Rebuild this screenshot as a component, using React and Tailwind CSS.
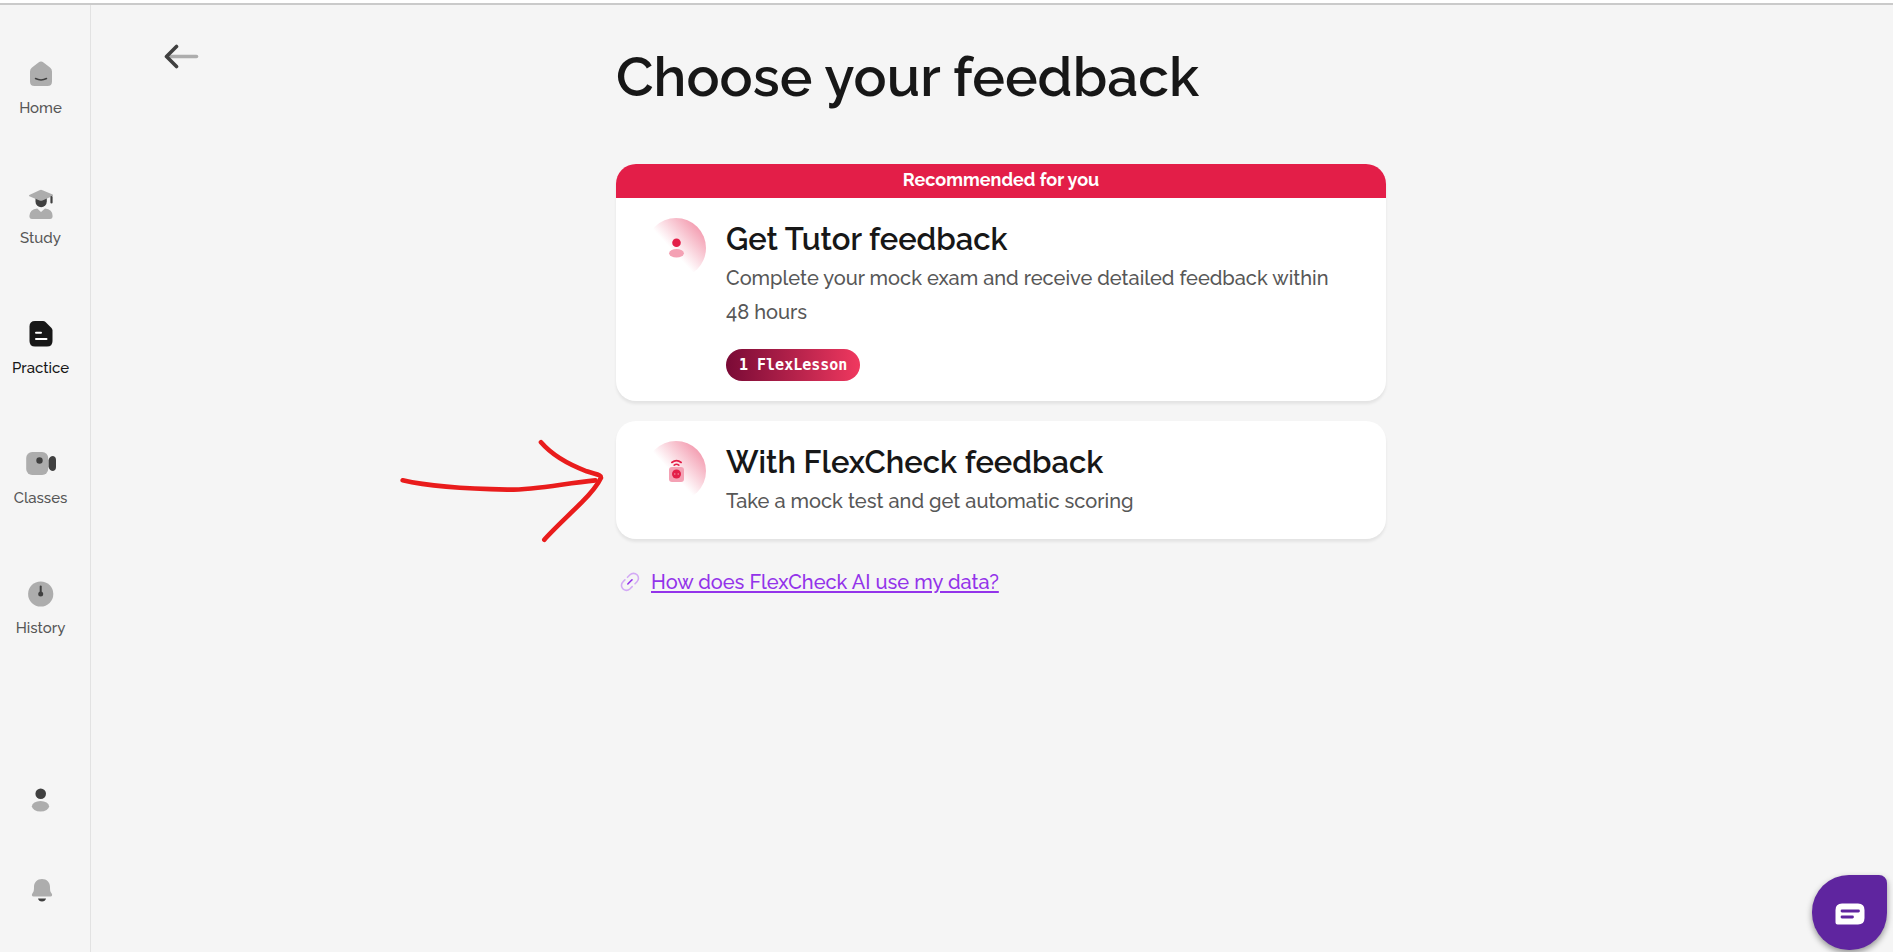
const fontBody = "font-[Raleway,Lato,'Open_Sans',sans-serif]";

function HomeIcon() {
  return (
    <svg width="32" height="32" viewBox="0 0 32 32" aria-hidden="true">
      <path d="M5 13.5Q5 11 7 9.500L13.500 4.500Q16 2.600 18.500 4.500L25 9.500Q27 11 27 13.500V23.500Q27 28 22.500 28H9.500Q5 28 5 23.500Z" fill="#adadad" />
      <path d="M10.500 20.500Q16 23.300 21.500 20.500" fill="none" stroke="#404040" strokeWidth="1.500" strokeLinecap="round" />
    </svg>
  );
}

function StudyIcon() {
  return (
    <svg width="32" height="32" viewBox="0 0 32 32" aria-hidden="true">
      <path d="M10.500 9H21.800V13.500A5.650 5.800 0 0 1 10.500 13.500Z" fill="#404040" />
      <path d="M4.300 7L14.500 2.200Q16 1.500 17.500 2.200L27.700 6.600Q28.500 7.200 27.700 7.900L17.500 12.500Q16 13.200 14.500 12.500L4.300 8.300Q3.500 7.700 4.300 7Z" fill="#adadad" />
      <path d="M26.500 9V14.500" stroke="#404040" strokeWidth="2.200" strokeLinecap="round" />
      <path d="M12.200 20.600L16 24L20 20.600Q27.600 21.500 27.600 28Q27.600 31 25 31H7Q4.400 31 4.400 28Q4.800 21.500 12.200 20.600Z" fill="#adadad" />
    </svg>
  );
}

function PracticeIcon() {
  return (
    <svg width="32" height="32" viewBox="0 0 32 32" aria-hidden="true">
      <path d="M10 3H18Q19.500 3 20.500 4L26.500 10Q27.500 11 27.500 12.500V23Q27.500 28.500 22 28.500H10Q4.500 28.500 4.500 23V8.500Q4.500 3 10 3Z" fill="#171717" />
      <path d="M11 14.700H16M11 21H21.500" stroke="#fff" strokeWidth="2" strokeLinecap="round" />
    </svg>
  );
}

function ClassesIcon() {
  return (
    <svg width="32" height="32" viewBox="0 0 32 32" aria-hidden="true">
      <rect x="1.200" y="4" width="22" height="23" rx="6" fill="#adadad" />
      <circle cx="14.500" cy="12.500" r="3.200" fill="#404040" />
      <path d="M23.500 12Q24.700 8 28 8Q31 8.500 31 12V19Q31 22.500 28 23Q24.700 23 23.500 19Z" fill="#404040" />
    </svg>
  );
}

function HistoryIcon() {
  return (
    <svg width="32" height="32" viewBox="0 0 32 32" aria-hidden="true">
      <circle cx="15.700" cy="16" r="12.600" fill="#adadad" />
      <path d="M15.700 8.500V16" stroke="#404040" strokeWidth="2" strokeLinecap="round" />
      <circle cx="15.700" cy="16" r="2.500" fill="#404040" />
    </svg>
  );
}

const navItems = [
  { label: "Home", Icon: HomeIcon },
  { label: "Study", Icon: StudyIcon },
  { label: "Practice", Icon: PracticeIcon, active: true },
  { label: "Classes", Icon: ClassesIcon },
  { label: "History", Icon: HistoryIcon },
];

function Sidebar() {
  return (
    <aside className="flex w-[91px] shrink-0 flex-col justify-between border-r border-[#e2e2e2] pt-[53px] pr-[9px] pb-[44px]">
      <nav className="flex flex-col gap-[70px]">
        {navItems.map(({ label, Icon, active }) => (
          <a
            key={label}
            href="#"
            className={`flex h-[60px] flex-col items-center justify-between text-[15px] leading-5 font-medium ${active ? "text-[#171717]" : "text-[#575757]"}`}
          >
            <Icon />
            {label}
          </a>
        ))}
      </nav>
      <div className="flex flex-col items-center gap-[54px]">
        <button type="button" aria-label="Profile" className="size-9">
          <svg width="36" height="36" viewBox="0 0 36 36" aria-hidden="true">
            <circle cx="17.700" cy="11.800" r="5.300" fill="#404040" />
            <ellipse cx="17.500" cy="24.300" rx="8.600" ry="5.300" fill="#adadad" />
          </svg>
        </button>
        <button type="button" aria-label="Notifications" className="size-9">
          <svg width="36" height="36" viewBox="0 0 36 36" aria-hidden="true">
            <path d="M19 7C23.800 7 27 10.500 27 15C27 19 27.500 20 28.500 21.300C29.800 23 29 24.500 27.500 24.500H10.500C9 24.500 8.200 23 9.500 21.300C10.500 20 11 19 11 15C11 10.500 14.200 7 19 7Z" fill="#adadad" />
            <path d="M15 26.500H23Q22.300 29.500 19 29.500Q15.700 29.500 15 26.500Z" fill="#404040" />
          </svg>
        </button>
      </div>
    </aside>
  );
}

function IconHalo({ id, children }) {
  return (
    <svg width="60" height="60" viewBox="0 0 60 60" aria-hidden="true" className="shrink-0">
      <defs>
        <linearGradient id={id} x1="52" y1="10" x2="27" y2="33" gradientUnits="userSpaceOnUse">
          <stop offset="0" stopColor="#f4a1b4" />
          <stop offset="1" stopColor="#fff" />
        </linearGradient>
      </defs>
      <circle cx="30" cy="30" r="30" fill={`url(#${id})`} />
      {children}
    </svg>
  );
}

function TutorIcon() {
  return (
    <IconHalo id="halo-tutor">
      <circle cx="30.500" cy="24.700" r="4.300" fill="#e31e48" />
      <ellipse cx="30.500" cy="35.200" rx="7.400" ry="4.200" fill="#f4a1b4" />
    </IconHalo>
  );
}

function RobotIcon() {
  return (
    <IconHalo id="halo-robot">
      <path d="M25.800 21.500Q30.500 17.800 35.200 21.500M28.200 24.200Q30.500 22.400 32.800 24.200" fill="none" stroke="#e31e48" strokeWidth="1.600" strokeLinecap="round" />
      <rect x="23" y="26" width="15" height="15" rx="3" fill="#f4a1b4" />
      <circle cx="30.500" cy="33" r="4.500" fill="#e31e48" />
      <circle cx="28.800" cy="33" r="0.700" fill="#f4a1b4" />
      <circle cx="32.200" cy="33" r="0.700" fill="#f4a1b4" />
    </IconHalo>
  );
}

function OptionCard({ banner, icon, title, text, badge }) {
  return (
    <button type="button" className="block w-full overflow-hidden rounded-[20px] bg-white text-left shadow-[0_3px_3px_rgba(0,0,0,0.07)]">
      {banner && (
        <span className="block bg-[#e31e48] pt-[3px] pb-[5px] text-center text-lg leading-[26px] font-bold text-white">{banner}</span>
      )}
      <span className="flex gap-5 px-[30px] py-5">
        {icon}
        <span className="block min-h-[78px] min-w-0 pr-4">
          <span className="block text-[31px] leading-[43px] font-semibold text-[#171717]">{title}</span>
          <span className="block text-xl leading-[34px] font-medium text-[#575757]">{text}</span>
          {badge && (
            <span className="mt-5 inline-block rounded-full bg-linear-to-r from-[#7a0a36] to-[#f0385f] px-[13px] align-top font-['DejaVu_Sans_Mono',monospace] text-[15px] leading-8 font-bold text-white">
              {badge}
            </span>
          )}
        </span>
      </span>
    </button>
  );
}

function PointerArrow() {
  return (
    <svg
      width="230"
      height="140"
      viewBox="0 0 690 420"
      aria-hidden="true"
      className="pointer-events-none absolute -top-px right-full -mr-1 max-w-none"
      fill="none"
      stroke="#e91c1c"
      strokeWidth="14"
      strokeLinecap="round"
      strokeLinejoin="round"
    >
      <path d="M38 181C120 200 240 207 352 209C440 210 520 190 616 181" />
      <path d="M453 67C490 110 545 137 590 154C620 164 633 164 633 173C625 190 600 222 575 247C535 287 485 333 463 359" />
    </svg>
  );
}

function LinkIcon() {
  return (
    <svg width="20" height="20" viewBox="0 0 20 20" fill="none" strokeWidth="1.600" strokeLinecap="round" aria-hidden="true">
      <path d="M7.500 5.300L10 2.800A4.800 4.800 0 0 1 17 9.800L15 11.800" stroke="#d3aaf5" />
      <path d="M4.900 7.900L3 9.800A4.800 4.800 0 0 0 9.800 17L12.200 14.600" stroke="#d3aaf5" />
      <path d="M7.800 12L12 7.800" stroke="#9333ea" />
    </svg>
  );
}

export default function App() {
  return (
    <div className={`flex min-h-screen flex-col bg-[#f5f5f5] ${fontBody}`}>
      <div className="h-[5px] border-b-2 border-[#cacaca] bg-white" />
      <div className="flex grow">
        <Sidebar />
        <main className="grid grow grid-cols-[1fr_minmax(0,770px)_1fr] pl-[18px]">
          <div className="pt-[39px] pl-[54px]">
            <button type="button" aria-label="Back" className="block">
              <svg width="36" height="26" viewBox="0 0 36 26" fill="none" strokeWidth="3.600" strokeLinecap="round" strokeLinejoin="round" aria-hidden="true">
                <path d="M6 12.500H33.500" stroke="#adadad" />
                <path d="M13.500 2.500L3.500 12.500L13.500 22.500" stroke="#404040" />
              </svg>
            </button>
          </div>
          <div>
            <h1 className="pt-9 text-[55px] leading-[72px] font-semibold text-[#171717]">Choose your feedback</h1>
            <div className="mt-[51px] flex flex-col gap-5">
              <OptionCard
                banner="Recommended for you"
                icon={<TutorIcon />}
                title="Get Tutor feedback"
                text="Complete your mock exam and receive detailed feedback within 48 hours"
                badge="1 FlexLesson"
              />
              <div className="relative">
                <OptionCard
                  icon={<RobotIcon />}
                  title="With FlexCheck feedback"
                  text="Take a mock test and get automatic scoring"
                />
                <PointerArrow />
              </div>
            </div>
            <a href="#" className="mt-[27px] ml-1 inline-flex items-center gap-[11px] text-xl leading-8 font-medium text-[#9333ea]">
              <LinkIcon />
              <span className="underline decoration-2 underline-offset-2">How does FlexCheck AI use my data?</span>
            </a>
          </div>
        </main>
      </div>
      <button
        type="button"
        aria-label="Open chat"
        className="fixed right-[6px] bottom-[2px] flex size-[75px] items-center justify-center rounded-[37px] rounded-tr-lg bg-[#5f259f] pt-0.5 shadow-[0_3px_6px_rgba(0,0,0,0.4)]"
      >
        <svg width="30" height="22" viewBox="0 0 30 22" aria-hidden="true">
          <path d="M7 0.500H23Q29.500 0.500 29.500 7V15Q29.500 21.500 23 21.500H2.500Q0.500 21.500 0.500 19.500V7Q0.500 0.500 7 0.500Z" fill="#fff" />
          <path d="M7 8H23.500M7 14H17.500" stroke="#5f259f" strokeWidth="2.800" strokeLinecap="round" />
        </svg>
      </button>
    </div>
  );
}
